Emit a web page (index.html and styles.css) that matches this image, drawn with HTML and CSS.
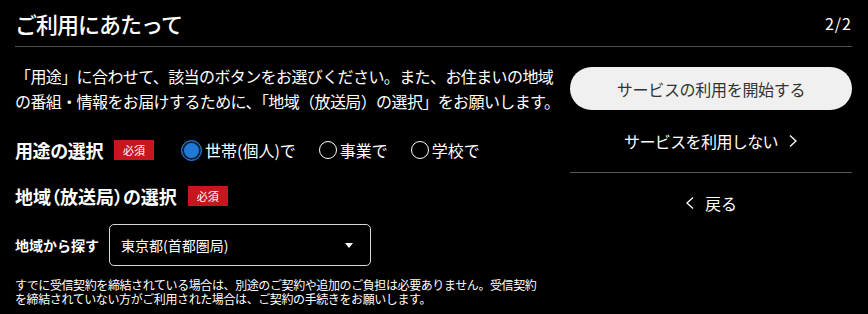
FILE: index.html
```html
<!DOCTYPE html>
<html lang="ja">
<head>
    <meta charset="UTF-8">
    <title>ご利用にあたって</title>
    <link rel="stylesheet" href="styles.css">
</head>
<body>
    <div class="page">
        <header class="top">
            <h1>ご利用にあたって</h1>
            <span class="step">2/2</span>
        </header>

        <main class="content">
            <section class="left">
                <p class="lead">「用途」に合わせて、該当のボタンをお選びください。また、お住まいの地域<br>の番組・情報をお届けするために、「地域（放送局）の選択」をお願いします。</p>

                <div class="row usage">
                    <h2>用途の選択</h2>
                    <span class="badge">必須</span>
                    <div class="radios">
                        <label class="radio checked"><span class="dot"></span>世帯(個人)で</label>
                        <label class="radio"><span class="dot"></span>事業で</label>
                        <label class="radio"><span class="dot"></span>学校で</label>
                    </div>
                </div>

                <div class="row area">
                    <h2 class="palt">地域（放送局）の選択</h2>
                    <span class="badge">必須</span>
                </div>

                <div class="search">
                    <span class="search-label">地域から探す</span>
                    <div class="select">
                        <span>東京都(首都圏局)</span>
                        <span class="caret"></span>
                    </div>
                </div>

                <p class="note">すでに受信契約を締結されている場合は、別途のご契約や追加のご負担は必要ありません。受信契約<br>を締結されていない方がご利用された場合は、ご契約の手続きをお願いします。</p>
            </section>

            <aside class="right">
                <button class="start-btn">サービスの利用を開始する</button>
                <a class="link skip">サービスを利用しない
                    <svg width="10" height="14" viewBox="0 0 10 14"><path d="M2 1.5 L8 7 L2 12.5" fill="none" stroke="#fff" stroke-width="1.3"/></svg>
                </a>
                <hr class="divider">
                <a class="link back">
                    <svg width="10" height="14" viewBox="0 0 10 14"><path d="M8 1.5 L2 7 L8 12.5" fill="none" stroke="#fff" stroke-width="1.3"/></svg>
                    戻る</a>
            </aside>
        </main>
    </div>
</body>
</html>
```

FILE: styles.css
```css
body {
    margin: 0;
    background: #000;
    color: #fff;
    font-family: "Noto Sans CJK JP", "Noto Sans", sans-serif;
}

.page {
    width: 868px;
    height: 314px;
    padding: 0 16px 0 15px;
    box-sizing: border-box;
    overflow: hidden;
}

.top {
    height: 46px;
    display: flex;
    align-items: center;
    justify-content: space-between;
    border-bottom: 1px solid #505050;
}

.top h1 {
    margin: 0;
    font-size: 22px;
    font-weight: 500;
    letter-spacing: -1px;
    line-height: 30px;
}

.step {
    font-size: 16px;
    letter-spacing: 1px;
}

.content {
    display: flex;
    justify-content: space-between;
}

.left {
    width: 545px;
    padding-top: 17px;
}

.lead {
    margin: 0;
    font-size: 16px;
    line-height: 25px;
    letter-spacing: -0.6px;
    white-space: nowrap;
}

.row {
    display: flex;
    align-items: center;
    height: 24px;
}

.usage {
    margin-top: 24px;
}

.area {
    margin-top: 22px;
}

.row h2 {
    margin: 0;
    font-size: 18px;
    font-weight: 700;
    letter-spacing: -0.4px;
}

.row h2.palt {
    font-feature-settings: "palt";
    letter-spacing: 0;
}

.badge {
    width: 40px;
    height: 20px;
    line-height: 20px;
    text-align: center;
    background: #c8161e;
    font-size: 11px;
    margin-left: 11px;
}

.radios {
    display: flex;
    gap: 23px;
    margin-left: 27px;
}

.radio {
    display: flex;
    align-items: center;
    font-size: 16px;
    gap: 3px;
}

.dot {
    width: 18px;
    height: 18px;
    border: 1.5px solid #fff;
    border-radius: 50%;
    box-sizing: border-box;
}

.radio.checked .dot {
    width: 21px;
    height: 21px;
    border: 1px solid #2a7ad4;
    background: #1f7ad6;
    box-shadow: inset 0 0 0 2px #0c2238;
}

.search {
    display: flex;
    align-items: center;
    margin-top: 16px;
}

.search-label {
    font-size: 14px;
    font-weight: 700;
    width: 94px;
}

.select {
    width: 262px;
    height: 42px;
    box-sizing: border-box;
    border: 1px solid #d8d8d8;
    border-radius: 5px;
    display: flex;
    align-items: center;
    justify-content: space-between;
    padding: 0 17px 0 11px;
    font-size: 14px;
}

.caret {
    width: 0;
    height: 0;
    border-left: 4.5px solid transparent;
    border-right: 4.5px solid transparent;
    border-top: 5px solid #fff;
}

.note {
    margin: 12px 0 0;
    font-size: 12px;
    line-height: 14px;
    letter-spacing: -0.4px;
    white-space: nowrap;
}

.right {
    width: 282px;
    padding-top: 20px;
    display: flex;
    flex-direction: column;
    align-items: center;
}

.start-btn {
    width: 100%;
    height: 43px;
    border: none;
    border-radius: 22px;
    background: #f0f0f0;
    color: #333;
    font-family: inherit;
    font-size: 16px;
    letter-spacing: -0.3px;
}

.link {
    display: flex;
    align-items: center;
    gap: 10px;
    font-size: 16px;
    line-height: 24px;
    color: #fff;
}

.skip {
    margin-top: 19px;
    letter-spacing: -0.6px;
}

.divider {
    width: 100%;
    border: none;
    border-top: 1px solid #555;
    margin: 19px 0 0;
}

.back {
    margin-top: 18px;
}
```
